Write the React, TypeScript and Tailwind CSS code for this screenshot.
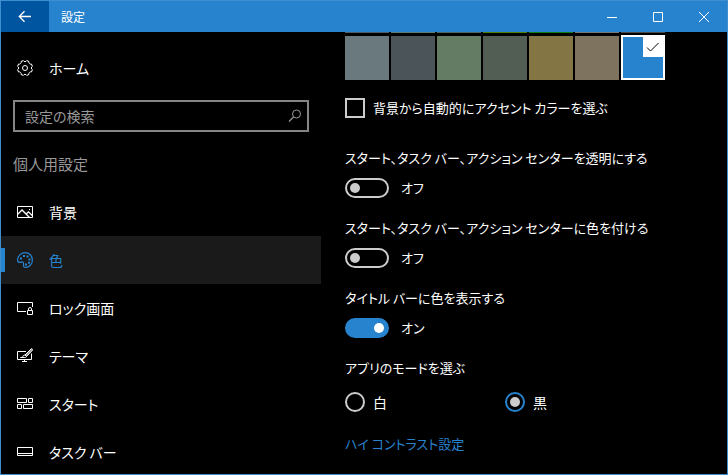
import React, { useState } from 'react';
import { clsx } from 'clsx';

interface IconProps {
  className?: string;
}

const iconBase = {
  width: 16,
  height: 16,
  viewBox: '0 0 16 16',
  fill: 'none',
  stroke: 'currentColor',
  strokeWidth: 1,
  'aria-hidden': true,
} as const;

const GearIcon = ({ className }: IconProps) => (
  <svg {...iconBase} className={className}>
    <path d="M9.7.6 12 1.55A1.9 1.9 0 0 0 14.45 4l.95 2.3a1.9 1.9 0 0 0 0 3.4L14.45 12A1.9 1.9 0 0 0 12 14.45l-2.3.95a1.9 1.9 0 0 0-3.4 0L4 14.45A1.9 1.9 0 0 0 1.55 12L.6 9.7a1.9 1.9 0 0 0 0-3.4L1.55 4A1.9 1.9 0 0 0 4 1.55L6.3.6a1.9 1.9 0 0 0 3.4 0z" />
    <circle cx="8" cy="8" r="2.5" />
  </svg>
);

const PictureIcon = ({ className }: IconProps) => (
  <svg {...iconBase} className={className}>
    <path d="M.5 2.5h15v11H.5z" />
    <path d="M.8 10.2 5 6l7.3 7.3M9.2 10l2.3-2.2 3.7 3.7" strokeWidth={1.3} />
    <path d="M12 5.5h1" />
  </svg>
);

const PaletteIcon = ({ className }: IconProps) => (
  <svg {...iconBase} strokeWidth={1.2} className={className}>
    <path d="M.6 7.5C1 3.6 4.2.6 8.2.6c4 0 7.2 3.3 7.2 7.4s-3.2 7.4-7 7.4c-1.5 0-2.1-1-1.9-2.3.2-1.4.2-2.2-.5-2.9-.9-.8-1.5 0-2.7.2C1.5 10.5.4 9.5.6 7.5z" />
    <g fill="currentColor" stroke="none">
      <path d="M3 5.5h2v2H3zM6 3h2v2H6zM9.500 3.500h2v2h-2zM11.500 6.500h2v2h-2zM11 9.800h2v2h-2zM8 11.500h2v2H8z" />
    </g>
  </svg>
);

const LockScreenIcon = ({ className }: IconProps) => (
  <svg {...iconBase} className={className}>
    <path d="M9 11.5H.5v-9h15V7" />
    <path d="M10.5 10.5h5v4h-5zM11.5 10.5V9a1.5 1.5 0 0 1 3 0v1.5" />
  </svg>
);

const ThemeIcon = ({ className }: IconProps) => (
  <svg {...iconBase} className={className}>
    <path d="M9 3.5H.5v8h14v-6M7.5 11.5v2M5 13.5h5" />
    <path d="M14.2.8 8 7l1.5 1.5 5.8-6.2c.6-.9-.3-2-1.1-1.5z" fill="currentColor" fillOpacity={0.6} />
    <path d="M8 7c-1.5 0-2 .8-2.2 1.7C5.7 9.3 5 9.5 3.5 9.5h3.7c1.3 0 2.3-.2 2.3-1" />
  </svg>
);

const StartIcon = ({ className }: IconProps) => (
  <svg {...iconBase} className={className}>
    <path d="M.5 2.5h9v4h-9zM11.5 2.5h4v4h-4zM.5 8.5h4v4h-4zM6.5 8.5h9v4h-9z" />
  </svg>
);

const TaskbarIcon = ({ className }: IconProps) => (
  <svg {...iconBase} className={className}>
    <path d="M.5 3.5h15v8H.5zM.5 9.5h15" />
  </svg>
);

const navItems = [
  { label: '背景', icon: PictureIcon },
  { label: '色', icon: PaletteIcon },
  { label: 'ロック画面', icon: LockScreenIcon },
  { label: 'テーマ', icon: ThemeIcon },
  { label: 'スタート', icon: StartIcon },
  { label: 'タスク バー', icon: TaskbarIcon },
];

const previousSwatches = [
  'bg-[#515c6b]',
  'bg-[#567c73]',
  'bg-[#486860]',
  'bg-[#498205]',
  'bg-[#107c10]',
  'bg-[#767676]',
  'bg-[#4c4a48]',
];

const swatches = [
  { name: 'ブルー グレー', color: 'bg-[#69797e]' },
  { name: 'スチール', color: 'bg-[#4a5459]' },
  { name: 'グリーン', color: 'bg-[#647c64]' },
  { name: 'モス', color: 'bg-[#525e54]' },
  { name: 'オリーブ', color: 'bg-[#847545]' },
  { name: 'サンド', color: 'bg-[#7e735f]' },
  { name: 'ブルー', color: 'bg-[#2883ce]' },
];

interface ToggleProps {
  id: string;
  label: string;
  defaultOn?: boolean;
}

function Toggle({ id, label, defaultOn = false }: ToggleProps) {
  const [on, setOn] = useState(defaultOn);

  return (
    <div className="mb-5">
      <label htmlFor={id} className="block h-5 leading-5">
        {label}
      </label>
      <div className="mt-2.5 flex items-center gap-3">
        <input
          id={id}
          type="checkbox"
          role="switch"
          checked={on}
          onChange={(e) => setOn(e.target.checked)}
          className="flex h-5 w-11 shrink-0 appearance-none items-center rounded-full border-2 border-[#ccc] px-[3px] before:size-2.5 before:rounded-full before:bg-[#ccc] checked:justify-end checked:border-[#2883ce] checked:bg-[#2883ce] checked:before:bg-white"
        />
        <span className="leading-5">{on ? 'オン' : 'オフ'}</span>
      </div>
    </div>
  );
}

function TitleBar() {
  return (
    <header className="flex h-[31px] shrink-0 items-stretch bg-[#2883ce]">
      <button type="button" aria-label="戻る" className="flex w-12 items-center justify-center bg-[#0055a0]">
        <svg {...iconBase} strokeWidth={1.3}>
          <path d="M14 7.5H2.5M7.5 2.3 2.3 7.5l5.2 5.2" />
        </svg>
      </button>
      <h1 className="ml-3 flex-1 self-center text-xs leading-4">設定</h1>
      <button type="button" aria-label="最小化" className="flex w-[46px] items-center justify-center">
        <svg {...iconBase} width={10} height={10} viewBox="0 0 10 10">
          <path d="M0 5.5h10" />
        </svg>
      </button>
      <button type="button" aria-label="最大化" className="flex w-[46px] items-center justify-center">
        <svg {...iconBase} width={10} height={10} viewBox="0 0 10 10">
          <path d="M.5.5h9v9h-9z" />
        </svg>
      </button>
      <button type="button" aria-label="閉じる" className="flex w-[46px] items-center justify-center">
        <svg {...iconBase} width={10} height={10} viewBox="0 0 10 10">
          <path d="m0 0 10 10M10 0 0 10" />
        </svg>
      </button>
    </header>
  );
}

function Sidebar() {
  const [active, setActive] = useState('色');

  return (
    <aside className="w-80 shrink-0 overflow-hidden pt-3 text-sm">
      <a href="#home" className="flex h-12 items-center gap-4 px-4">
        <GearIcon className="shrink-0" />
        ホーム
      </a>
      <div className="mx-3 mt-2 flex h-8 items-center border-2 border-[#858585] pr-1 pl-2.5 text-[#999]">
        <input
          type="text"
          aria-label="設定の検索"
          placeholder="設定の検索"
          className="min-w-0 flex-1 bg-transparent leading-5 outline-none placeholder:text-[#999]"
        />
        <svg {...iconBase} className="shrink-0">
          <circle cx="9.5" cy="6" r="4" />
          <path d="M6.5 9 2 13.5" strokeWidth={1.3} />
        </svg>
      </div>
      <h2 className="mt-5 mb-3 ml-3 h-6 text-[15px] leading-6 text-[#999]">個人用設定</h2>
      <nav>
        {navItems.map(({ label, icon: Icon }) => (
          <a
            key={label}
            href="#"
            onClick={() => setActive(label)}
            className={clsx(
              'relative flex h-12 items-center gap-4 px-4',
              label === active && 'bg-[#1a1a1a] text-[#2883ce]'
            )}
          >
            {label === active && <span className="absolute top-3 left-0 h-6 w-1 bg-[#2883ce]" />}
            <Icon className="shrink-0" />
            {label}
          </a>
        ))}
      </nav>
    </aside>
  );
}

export default function App() {
  const [swatch, setSwatch] = useState('ブルー');
  const [mode, setMode] = useState('黒');

  return (
    <div className="flex h-screen flex-col overflow-hidden border border-[#3f8fd0] bg-black font-['Noto_Sans_CJK_JP',sans-serif] text-white [font-feature-settings:'palt']">
      <TitleBar />
      <div className="flex min-h-0 flex-1">
        <Sidebar />
        <main className="min-w-0 flex-1 overflow-hidden pl-6 text-[13px]">
          <div className="flex gap-0.5">
            {previousSwatches.map((color) => (
              <span key={color} className={clsx('h-px w-11', color)} />
            ))}
          </div>
          <div className="mt-0.5 flex items-end gap-0.5">
            {swatches.map(({ name, color }) => (
              <button
                key={name}
                type="button"
                aria-label={name}
                onClick={() => setSwatch(name)}
                className={clsx(
                  'flex w-11 items-start justify-end',
                  color,
                  name === swatch ? 'h-[45px] border-2 border-white' : 'h-11'
                )}
              >
                {name === swatch && (
                  <span className="flex size-5 items-center justify-center bg-white text-black">
                    <svg {...iconBase}>
                      <path d="m2 8.5 3.5 3.5 8-8" />
                    </svg>
                  </span>
                )}
              </button>
            ))}
          </div>

          <label className="mt-[18px] mb-[30px] flex h-5 items-center gap-2">
            <input
              type="checkbox"
              className="size-5 shrink-0 appearance-none border-2 border-[#ccc] checked:bg-[#2883ce]"
            />
            背景から自動的にアクセント カラーを選ぶ
          </label>

          <Toggle id="transparent" label="スタート、タスク バー、アクション センターを透明にする" />
          <Toggle id="accent" label="スタート、タスク バー、アクション センターに色を付ける" />
          <Toggle id="titlebar" label="タイトル バーに色を表示する" defaultOn />

          <fieldset>
            <legend className="leading-5">アプリのモードを選ぶ</legend>
            <div className="mt-3.5 flex">
              {['白', '黒'].map((value) => (
                <label key={value} className="flex h-5 w-40 items-center gap-2 text-sm">
                  <input
                    type="radio"
                    name="mode"
                    checked={mode === value}
                    onChange={() => setMode(value)}
                    className="flex size-5 shrink-0 appearance-none items-center justify-center rounded-full border-2 border-[#ccc] checked:border-[#2883ce] checked:before:size-2.5 checked:before:rounded-full checked:before:bg-[#ccc]"
                  />
                  {value}
                </label>
              ))}
            </div>
          </fieldset>

          <a href="#contrast" className="mt-5 inline-block leading-6 text-[#2883ce]">
            ハイ コントラスト設定
          </a>
        </main>
      </div>
    </div>
  );
}
